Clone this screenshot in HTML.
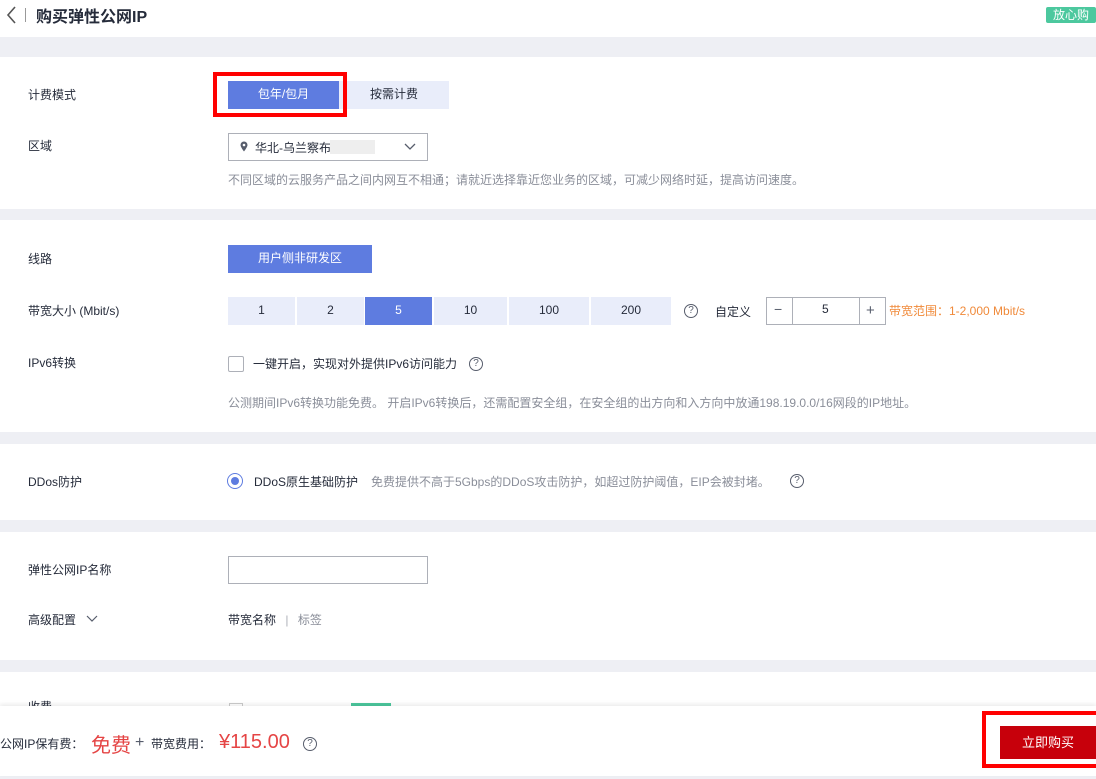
<!DOCTYPE html>
<html><head><meta charset="utf-8"><style>
*{margin:0;padding:0;box-sizing:border-box}
body{width:1096px;height:779px;overflow:hidden;background:#eeeff4;font-family:"Liberation Sans","Noto Sans CJK SC",sans-serif;font-size:12px;color:#252b3a;position:relative}
.a{position:absolute}
.w{position:absolute;left:0;width:1096px;background:#fff}
.lbl{position:absolute;left:28px;color:#252b3a;font-size:12px}
.btn{position:absolute;height:28px;line-height:27px;text-align:center;font-size:12px}
.q{position:absolute;width:14px;height:14px;border:1px solid #575d6c;border-radius:50%;font-size:10px;line-height:12px;text-align:center;color:#575d6c}
.gray{color:#8a8e99}
</style></head><body>
<div class="w" style="top:0;height:37px"></div>
<svg class="a" style="left:5px;top:6px" width="12" height="18"><path d="M10 1 L3 9 L10 17" stroke="#555" stroke-width="1.6" fill="none"/></svg>
<div class="a" style="left:25px;top:8px;width:1px;height:14px;background:#999"></div>
<div class="a" style="left:36px;top:3px;font-size:16px;font-weight:bold;color:#252b3a">购买弹性公网IP</div>
<div class="a" style="left:1046px;top:7px;width:50px;height:16px;background:#4cc89e;color:#fff;font-size:12px;line-height:16px;text-align:center;border-radius:2px">放心购</div>

<div class="w" style="top:57px;height:152px"></div>
<div class="lbl" style="top:86px">计费模式</div>
<div class="btn" style="left:228px;top:81px;width:111px;background:#5e7ce0;color:#fff">包年/包月</div>
<div class="btn" style="left:339px;top:81px;width:110px;background:#e9edfa;color:#252b3a">按需计费</div>
<div class="a" style="left:213px;top:72px;width:134px;height:45px;border:4px solid #f00"></div>
<div class="lbl" style="top:137px">区域</div>
<div class="a" style="left:228px;top:133px;width:200px;height:28px;border:1px solid #adb0b8;background:#fff"></div>
<svg class="a" style="left:240px;top:141px" width="8" height="11"><path d="M4 0.5 A3.5 3.5 0 0 1 7.5 4 C7.5 6 4 10.5 4 10.5 C4 10.5 0.5 6 0.5 4 A3.5 3.5 0 0 1 4 0.5Z" fill="#575d6c"/><circle cx="4" cy="4" r="1.3" fill="#fff"/></svg>
<div class="a" style="left:255px;top:139px">华北-乌兰察布</div>
<div class="a" style="left:330px;top:140px;width:45px;height:14px;background:#eee"></div>
<svg class="a" style="left:404px;top:143px" width="12" height="8"><path d="M1 1 L6 6 L11 1" stroke="#575d6c" stroke-width="1.3" fill="none"/></svg>
<div class="a gray" style="left:228px;top:171px">不同区域的云服务产品之间内网互不相通；请就近选择靠近您业务的区域，可减少网络时延，提高访问速度。</div>

<div class="w" style="top:220px;height:212px"></div>
<div class="lbl" style="top:250px">线路</div>
<div class="btn" style="left:228px;top:245px;width:144px;background:#5e7ce0;color:#fff">用户侧非研发区</div>
<div class="lbl" style="top:302px">带宽大小 (Mbit/s)</div>
<div class="btn" style="left:228px;top:297px;width:67px;background:#e9edfa">1</div>
<div class="btn" style="left:297px;top:297px;width:67px;background:#e9edfa">2</div>
<div class="btn" style="left:365px;top:297px;width:67px;background:#5e7ce0;color:#fff">5</div>
<div class="btn" style="left:434px;top:297px;width:73px;background:#e9edfa">10</div>
<div class="btn" style="left:509px;top:297px;width:80px;background:#e9edfa">100</div>
<div class="btn" style="left:591px;top:297px;width:80px;background:#e9edfa">200</div>
<div class="q" style="left:684px;top:304px">?</div>
<div class="a" style="left:715px;top:303px">自定义</div>
<div class="a" style="left:766px;top:297px;width:120px;height:28px;border:1px solid #adb0b8"></div>
<div class="a" style="left:792px;top:297px;width:1px;height:28px;background:#adb0b8"></div>
<div class="a" style="left:859px;top:297px;width:1px;height:28px;background:#adb0b8"></div>
<div class="a" style="left:774px;top:301px;font-size:14px;color:#575d6c">−</div>
<div class="a" style="left:822px;top:302px">5</div>
<div class="a" style="left:866px;top:302px;font-size:15px;color:#575d6c">+</div>
<div class="a" style="left:889px;top:302px;color:#f08a3a">带宽范围：1-2,000 Mbit/s</div>
<div class="lbl" style="top:354px">IPv6转换</div>
<div class="a" style="left:228px;top:356px;width:16px;height:16px;border:1px solid #adb0b8;border-radius:2px"></div>
<div class="a" style="left:253px;top:355px">一键开启，实现对外提供IPv6访问能力</div>
<div class="q" style="left:469px;top:357px">?</div>
<div class="a gray" style="left:228px;top:394px">公测期间IPv6转换功能免费。 开启IPv6转换后，还需配置安全组，在安全组的出方向和入方向中放通198.19.0.0/16网段的IP地址。</div>

<div class="w" style="top:444px;height:76px"></div>
<div class="lbl" style="top:473px">DDos防护</div>
<div class="a" style="left:227px;top:473px;width:16px;height:16px;border:1px solid #5e7ce0;border-radius:50%"></div>
<div class="a" style="left:231px;top:477px;width:8px;height:8px;background:#5e7ce0;border-radius:50%"></div>
<div class="a" style="left:254px;top:473px">DDoS原生基础防护</div>
<div class="a gray" style="left:371px;top:473px">免费提供不高于5Gbps的DDoS攻击防护，如超过防护阈值，EIP会被封堵。</div>
<div class="q" style="left:790px;top:474px">?</div>

<div class="w" style="top:532px;height:128px"></div>
<div class="lbl" style="top:561px">弹性公网IP名称</div>
<div class="a" style="left:228px;top:556px;width:200px;height:28px;border:1px solid #adb0b8"></div>
<div class="lbl" style="top:611px">高级配置</div>
<svg class="a" style="left:86px;top:615px" width="12" height="8"><path d="M1 1 L6 6 L11 1" stroke="#575d6c" stroke-width="1.2" fill="none"/></svg>
<div class="a" style="left:228px;top:611px">带宽名称 <span style="color:#adb0b8;margin:0 6px">|</span> <span class="gray">标签</span></div>

<div class="w" style="top:672px;height:40px"></div>
<div class="lbl" style="top:698px">收费</div>
<div class="a" style="left:229px;top:703px;width:14px;height:8px;border:1px solid #ccc"></div>
<div class="a" style="left:351px;top:703px;width:40px;height:8px;background:#4cc89e"></div>

<div class="w" style="top:706px;height:70px;box-shadow:0 -2px 4px rgba(0,0,0,.08)"></div>
<div class="a" style="left:0;top:735px">公网IP保有费：</div>
<div class="a" style="left:91px;top:729px;font-size:20px;color:#e54545">免费</div>
<div class="a" style="left:135px;top:733px;font-size:16px;color:#575d6c;line-height:20px">+</div>
<div class="a" style="left:151px;top:735px">带宽费用：</div>
<div class="a" style="left:219px;top:731px;font-size:20px;color:#e54545">¥115.00</div>
<div class="q" style="left:303px;top:737px">?</div>
<div class="a" style="left:1000px;top:726px;width:96px;height:33px;background:#c7000b;color:#fff;line-height:33px;text-align:center;font-size:13px">立即购买</div>
<div class="a" style="left:982px;top:711px;width:114px;height:57px;border:4px solid #f00;border-right:none"></div>
</body></html>
